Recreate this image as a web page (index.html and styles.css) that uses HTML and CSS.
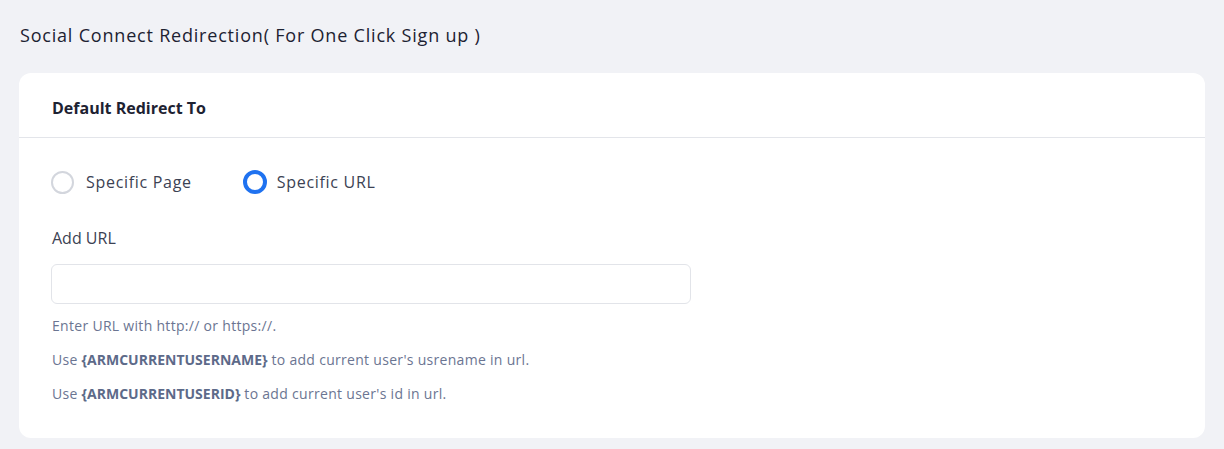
FILE: index.html
```html
<!DOCTYPE html>
<html>
<head>
  <title>Social Connect Redirection</title>
  <meta charset="UTF-8">
  <link rel="stylesheet" href="styles.css">
</head>
<body>
  <h1 class="page-title">Social Connect Redirection( For One Click Sign up )</h1>

  <div class="card">
    <div class="card-header">Default Redirect To</div>
    <div class="card-body">
      <div class="radio-group">
        <label class="radio-option">
          <input type="radio" name="redirect-type" value="page">
          <span class="radio-mark"></span>
          <span class="radio-label">Specific Page</span>
        </label>
        <label class="radio-option">
          <input type="radio" name="redirect-type" value="url" checked>
          <span class="radio-mark"></span>
          <span class="radio-label">Specific URL</span>
        </label>
      </div>

      <div class="field-label">Add URL</div>
      <input type="text" id="redirect-url" class="url-input">

      <div class="help-text">
        <p>Enter URL with http:// or https://.</p>
        <p>Use <b>{ARMCURRENTUSERNAME}</b> to add current user's usrename in url.</p>
        <p>Use <b>{ARMCURRENTUSERID}</b> to add current user's id in url.</p>
      </div>
    </div>
  </div>
</body>
</html>
```

FILE: styles.css
```css
body {
  margin: 0;
  padding: 0 19px;
  background-color: #f1f2f6;
  font-family: "Open Sans", Arial, sans-serif;
  color: #1d2232;
}

.page-title {
  margin: 0;
  padding: 23px 0 0 1px;
  height: 50px;
  font-size: 18px;
  font-weight: 500;
  line-height: 24px;
  letter-spacing: 0.8px;
  color: #1d2232;
}

.card {
  background-color: #ffffff;
  border-radius: 12px;
  height: 365px;
}

.card-header {
  height: 64px;
  line-height: 70px;
  padding-left: 33px;
  font-size: 16px;
  font-weight: 700;
  color: #1d2232;
  border-bottom: 1px solid #e3e5ea;
}

.card-body {
  padding: 0 33px;
}

.radio-group {
  display: flex;
  gap: 52px;
  padding-top: 32px;
  height: 56px;
}

.radio-option {
  display: flex;
  align-items: center;
  height: 24px;
  cursor: pointer;
}

.radio-option input {
  display: none;
}

.radio-mark {
  width: 19px;
  height: 19px;
  border: 2px solid #d3d6dd;
  border-radius: 50%;
  margin-right: 12px;
  margin-left: -1px;
}

input:checked + .radio-mark {
  width: 16px;
  height: 16px;
  border: 4px solid #1f72f0;
  margin-right: 10px;
}

.radio-label {
  font-size: 16px;
  letter-spacing: 0.7px;
  color: #3c4253;
}

.field-label {
  font-size: 16px;
  color: #3c4253;
  line-height: 22px;
  height: 37px;
  padding-top: 1px;
}

.url-input {
  display: block;
  width: 640px;
  height: 40px;
  box-sizing: border-box;
  border: 1px solid #e2e4e9;
  border-radius: 6px;
  margin-left: -1px;
}

.help-text {
  padding-top: 12px;
}

.help-text p {
  margin: 0 0 15px;
  font-size: 14px;
  line-height: 19px;
  letter-spacing: 0.3px;
  color: #6b7592;
}

.help-text b {
  color: #5d6a89;
  font-weight: 700;
  letter-spacing: 0;
}
```
